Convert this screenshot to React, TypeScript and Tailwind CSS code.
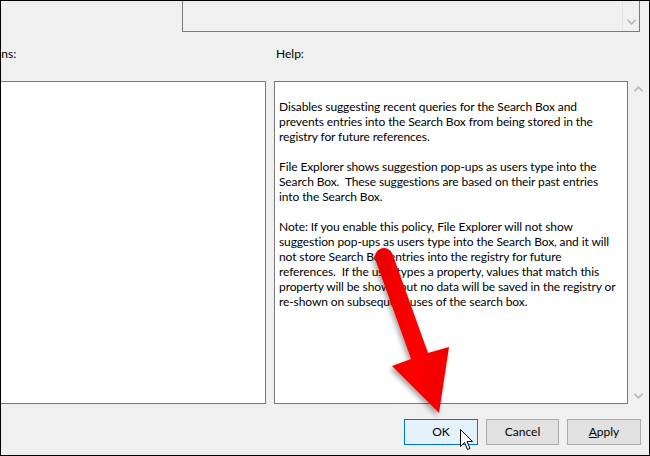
import React from "react";

const font = { fontFamily: 'Lato, "Open Sans", sans-serif' };

function ChevronDown({ className }: { className?: string }) {
  return (
    <svg width="9" height="6" viewBox="0 0 9 6" className={className}>
      <path d="M0.5 0.8 L4.5 4.8 L8.5 0.8" fill="none" stroke="#b8b8b8" strokeWidth="1.6" />
    </svg>
  );
}
function ChevronUp({ className }: { className?: string }) {
  return (
    <svg width="9" height="6" viewBox="0 0 9 6" className={className}>
      <path d="M0.5 5.2 L4.5 1.2 L8.5 5.2" fill="none" stroke="#b8b8b8" strokeWidth="1.6" />
    </svg>
  );
}

const helpParas: string[][] = [
  [
    "Disables suggesting recent queries for the Search Box and",
    "prevents entries into the Search Box from being stored in the",
    "registry for future references.",
  ],
  [
    "File Explorer shows suggestion pop-ups as users type into the",
    "Search Box.  These suggestions are based on their past entries",
    "into the Search Box.",
  ],
  [
    "Note: If you enable this policy, File Explorer will not show",
    "suggestion pop-ups as users type into the Search Box, and it will",
    "not store Search Box entries into the registry for future",
    "references.  If the user types a property, values that match this",
    "property will be shown but no data will be saved in the registry or",
    "re-shown on subsequent uses of the search box.",
  ],
];

export default function App() {
  return (
    <div
      className="relative w-[650px] h-[456px] overflow-hidden border border-black bg-[#f0f0f0] text-black flex flex-col text-[12px]"
      style={font}
    >
      {/* top box */}
      <div className="flex h-[31px] shrink-0">
        <div className="ml-[181px] w-[458px] h-full border-x border-b border-[#7a7a7a] flex justify-end">
          <div className="w-[17px] h-full border-l border-[#e3e3e3] flex items-end justify-center pb-[6px]">
            <ChevronDown />
          </div>
        </div>
      </div>

      {/* labels */}
      <div className="flex h-[49px] shrink-0 items-start pt-[14px]">
        <div className="w-[273px] overflow-hidden">
          <span className="block ml-[-30px] leading-[15px]">Options:</span>
        </div>
        <span className="ml-[2px] leading-[15px]">Help:</span>
      </div>

      {/* boxes */}
      <div className="flex h-[323px] shrink-0">
        <div className="w-[265px] h-full bg-white border-y border-r border-[#7a7a7a]" />
        <div className="ml-[8px] w-[354px] h-full bg-white border border-[#7a7a7a] pl-[4px] pt-[17px] leading-[15px] tracking-[-0.1px]">
          {helpParas.map((p, i) => (
            <div key={i} className={i > 0 ? "mt-[15px]" : ""}>
              {p.map((l, j) => (
                <div key={j} className="whitespace-pre">
                  {l}
                </div>
              ))}
            </div>
          ))}
        </div>
        <div className="w-[20px] h-full flex flex-col items-center justify-between pt-[5px] pb-[5px] pl-[1px]">
          <ChevronUp />
          <ChevronDown />
        </div>
      </div>

      {/* buttons */}
      <div className="flex mt-[15px] ml-[403px] gap-[7px]">
        <button className="w-[74px] h-[26px] border border-[#0078d7] bg-[#e5f1fb] flex items-center justify-center leading-none">
          OK
        </button>
        <button className="w-[73px] h-[26px] border border-[#adadad] bg-[#e1e1e1] flex items-center justify-center leading-none ml-[1px]">
          Cancel
        </button>
        <button className="w-[74px] h-[26px] border border-[#adadad] bg-[#e1e1e1] flex items-center justify-center leading-none ml-[1px]">
          <span>
            <span className="underline">A</span>pply
          </span>
        </button>
      </div>

      {/* red arrow overlay */}
      <svg className="absolute left-[-1px] top-[-1px] pointer-events-none" width="650" height="456" viewBox="0 0 650 456">
        <defs>
          <filter id="sh" x="-20%" y="-20%" width="140%" height="140%">
            <feDropShadow dx="-2" dy="3" stdDeviation="2.5" floodColor="#000" floodOpacity="0.35" />
          </filter>
          <linearGradient id="rg" x1="0" y1="0" x2="1" y2="0">
            <stop offset="0" stopColor="#e60000" />
            <stop offset="0.5" stopColor="#ff0000" />
            <stop offset="1" stopColor="#f00000" />
          </linearGradient>
        </defs>
        <path
          d="M392.5 254 L428 353 L449 347 L439 413 L392 366 L411 359 L375.5 260 A9 9 0 0 1 392.5 254 Z"
          fill="url(#rg)"
          filter="url(#sh)"
        />
        {/* mouse cursor */}
        <path
          d="M460.5 429.5 L460.5 446.5 L464.5 442.5 L467.5 449.5 L470 448.5 L467 441.5 L472.5 441.5 Z"
          fill="#fff"
          stroke="#000"
          strokeWidth="1"
          strokeLinejoin="miter"
        />
      </svg>
    </div>
  );
}
